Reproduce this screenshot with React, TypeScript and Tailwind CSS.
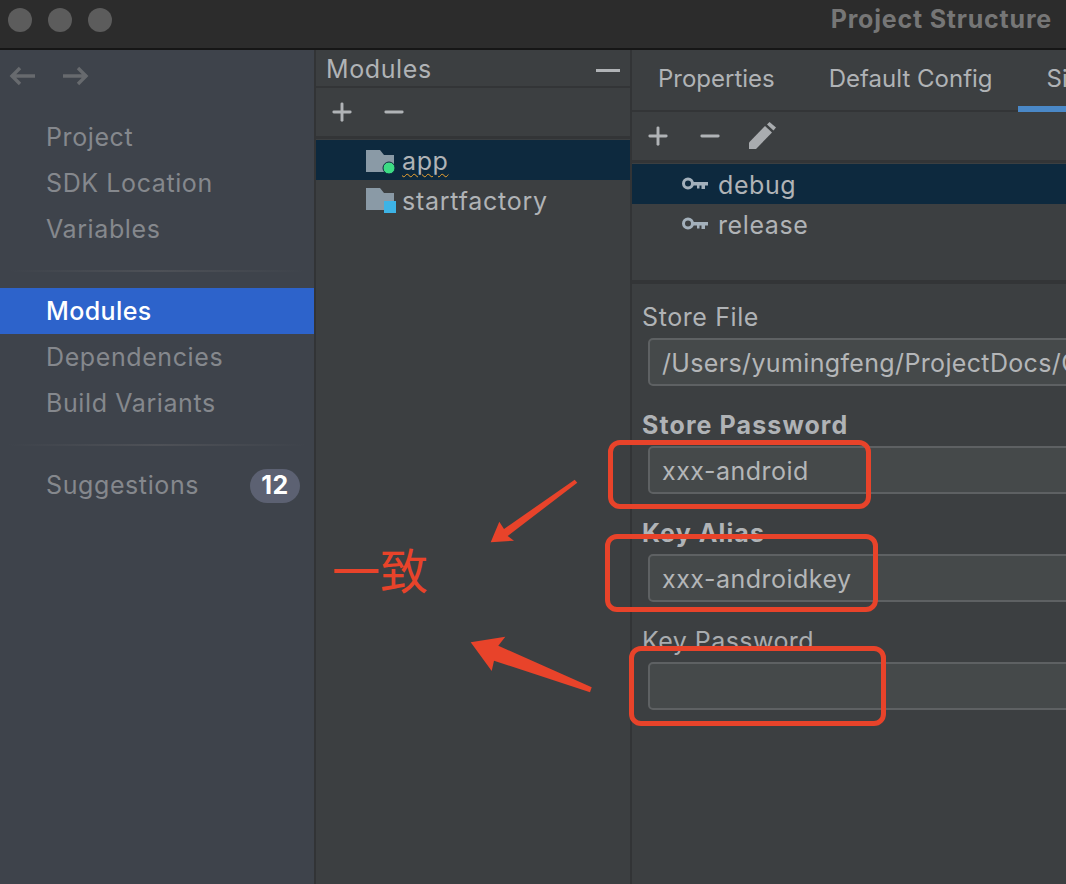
import { Minus, Plus } from "lucide-react";

const navTop = ["Project", "SDK Location", "Variables"];
const navMid = ["Modules", "Dependencies", "Build Variants"];

function ArrowLeft() {
  return (
    <svg width="28" height="20" viewBox="0 0 28 20" fill="none" stroke="#676a6e" strokeWidth="3.4">
      <path d="M27 10H3M12 2l-8 8 8 8" />
    </svg>
  );
}

function ArrowRight() {
  return (
    <svg width="28" height="20" viewBox="0 0 28 20" fill="none" stroke="#676a6e" strokeWidth="3.4">
      <path d="M1 10h24M16 2l8 8-8 8" />
    </svg>
  );
}

function Folder({ badge }: { badge: "dot" | "square" }) {
  return (
    <svg width="32" height="30" viewBox="0 0 32 30" className={`shrink-0 ${badge === "square" ? "mb-[4px]" : ""}`}>
      <path d="M0 5h14l4 5h10v17H0z" fill="#8a9aa6" />
      {badge === "dot" ? (
        <circle cx="23" cy="23" r="6" fill="#3ddc84" stroke="#0d293e" strokeWidth="1" />
      ) : (
        <rect x="18" y="18" width="12" height="12" fill="#3db3e6" />
      )}
    </svg>
  );
}

function KeyIcon() {
  return (
    <svg width="26" height="14" viewBox="0 0 26 14" fill="none" className="shrink-0">
      <circle cx="6" cy="6.500" r="4.500" stroke="#a3b0bb" strokeWidth="3" />
      <path d="M11 5h15v3.500h-3V12h-3.500V8.500h-2v3h-2.500V8.500H11z" fill="#a3b0bb" />
    </svg>
  );
}

function Pencil() {
  return (
    <svg width="28" height="28" viewBox="0 0 28 28" fill="#a9acaf">
      <path d="M1 20.500 17 4l7 6.500L8 27H1z" />
      <path d="M19 2.500 21.500 0 28 5.500 25.500 8.500z" />
    </svg>
  );
}

function Field({ label, value, bold, muted, tight }: { label: string; value?: string; bold?: boolean; muted?: boolean; tight?: boolean }) {
  return (
    <div className="flex h-[108px] flex-col">
      <div className={`h-[33px] pl-[10px] leading-[26px] ${bold ? "font-bold tracking-[1.1px]" : ""} ${muted ? "tracking-[0.45px] text-[#a9acaf]" : "text-[#b0b3b6]"}`}>
        {label}
      </div>
      <div className={`ml-[16px] mt-[1px] flex h-[48px] w-[460px] items-center overflow-hidden rounded-[5px] border-2 border-[#5e6163] bg-[#45494a] pl-[12px] pt-[4px] whitespace-nowrap text-[#b4b6b8] ${tight ? "tracking-[0.35px]" : "tracking-[0.5px]"}`}>
        {value}
      </div>
    </div>
  );
}

export default function App() {
  return (
    <div className="relative flex h-[884px] w-[1066px] flex-col overflow-hidden bg-[#3c3f41] font-['Inter',sans-serif] text-[25px] tracking-[0.6px]">
      {/* title bar */}
      <div className="flex h-[50px] shrink-0 items-center justify-between border-b-2 border-[#161616] bg-[#2c2c2c] pl-2 pr-[14px]">
        <div className="mb-[8px] flex gap-4">
          <div className="h-6 w-6 rounded-full bg-[#5c5c5c]" />
          <div className="h-6 w-6 rounded-full bg-[#5c5c5c]" />
          <div className="h-6 w-6 rounded-full bg-[#5c5c5c]" />
        </div>
        <div className="mb-[8px] font-bold tracking-[0.8px] text-[#767676]">Project Structure</div>
      </div>

      <div className="flex min-h-0 flex-1">
        {/* sidebar */}
        <div className="w-[316px] shrink-0 border-r-2 border-[#323436] bg-[#3e434b] text-[#85888d]">
          <div className="flex h-[52px] items-center gap-[26px] pl-2">
            <ArrowLeft />
            <ArrowRight />
          </div>
          <div className="mt-[13px]">
            {navTop.map((n) => (
              <div key={n} className="flex h-[46px] items-center pl-[46px]">{n}</div>
            ))}
          </div>
          <div className="mx-[8px] mt-[17px] mb-[16px] h-[2px] bg-linear-to-r from-transparent via-[#4e5157] to-transparent" />
          {navMid.map((n) => (
            <div key={n} className={`flex h-[46px] items-center pl-[46px] pt-[2px] ${n === "Modules" ? "bg-[#2d63cb] font-medium tracking-[0.4px] text-white" : ""}`}>
              {n}
            </div>
          ))}
          <div className="mx-[8px] mt-[18px] mb-[17px] h-[2px] bg-linear-to-r from-transparent via-[#4e5157] to-transparent" />
          <div className="flex h-[46px] items-center justify-between pl-[46px] pr-[14px]">
            <span>Suggestions</span>
            <span className="flex h-[34px] w-[50px] items-center justify-center rounded-full bg-[#5c6172] font-bold text-white">12</span>
          </div>
        </div>

        {/* modules column */}
        <div className="w-[316px] shrink-0 border-r-2 border-[#323436] text-[#b0b3b6]">
          <div className="flex h-[38px] items-center justify-between border-b-2 border-[#333537] pl-[10px] pr-[10px] pt-[4px]">
            <span>Modules</span>
            <div className="h-[3px] w-[24px] bg-[#b0b3b6]" />
          </div>
          <div className="flex h-[51px] items-center gap-[24px] border-b-[3px] border-[#333537] pl-[12px]">
            <Plus size={28} strokeWidth={2.5} />
            <Minus size={28} strokeWidth={2.5} />
          </div>
          <div className="pt-px">
            <div className="flex h-[40px] items-center gap-[4px] bg-[#0d293e] pl-[50px]">
              <Folder badge="dot" />
              <span className="pt-1 underline decoration-wavy decoration-[#f0a52f] decoration-1 underline-offset-[3px]">app</span>
            </div>
            <div className="flex h-[40px] items-center gap-[4px] pl-[50px]">
              <Folder badge="square" />
              <span className="pt-1 tracking-[0.75px]">startfactory</span>
            </div>
          </div>
        </div>

        {/* signing configs */}
        <div className="min-w-0 flex-1 text-[#b0b3b6]">
          <div className="relative flex h-[62px] gap-[54px] border-b-2 border-[#333537] pl-[26px] pt-[11px] text-[24px] tracking-normal whitespace-nowrap">
            <span>Properties</span>
            <span>Default Config</span>
            <span>Signing</span>
            <div className="absolute right-0 bottom-[-2px] h-[6px] w-[48px] bg-[#4a88c7]" />
          </div>
          <div className="flex h-[51px] items-center gap-[24px] border-b-[3px] border-[#333537] pl-[12px]">
            <Plus size={28} strokeWidth={2.5} />
            <Minus size={28} strokeWidth={2.5} />
            <Pencil />
          </div>
          <div className="h-[121px] border-b-4 border-[#333537] pt-px">
            <div className="flex h-[40px] items-center gap-[10px] bg-[#0d293e] pl-[50px]">
              <KeyIcon />
              <span className="pt-1">debug</span>
            </div>
            <div className="flex h-[40px] items-center gap-[10px] pl-[50px]">
              <KeyIcon />
              <span className="pt-1">release</span>
            </div>
          </div>
          <div className="pt-[20px]">
            <Field label="Store File" value="/Users/yumingfeng/ProjectDocs/Gradle/keystore" tight />
            <Field label="Store Password" value="xxx-android" bold />
            <Field label="Key Alias" value="xxx-androidkey" bold />
            <Field label="Key Password" muted />
          </div>
        </div>
      </div>

      {/* red annotations drawn on top of the screenshot */}
      <div className="absolute left-[608px] top-[440px] h-[69px] w-[263px] rounded-[12px] border-[5px] border-[#e8432a]" />
      <div className="absolute left-[605px] top-[534px] h-[78px] w-[273px] rounded-[12px] border-[5px] border-[#e8432a]" />
      <div className="absolute left-[629px] top-[646px] h-[80px] w-[257px] rounded-[12px] border-[5px] border-[#e8432a]" />
      <div className="absolute left-[332px] top-[533px] font-['Noto_Sans_CJK_SC',sans-serif] text-[48px] leading-[70px] tracking-normal text-[#e8432a]">一致</div>
      <svg className="absolute left-0 top-0" width="1066" height="884" fill="#e8432a">
        <path d="M490.700 542.300 499.300 521.700 504 529 574.700 479.700 577.300 482.700 507.700 536 514 540.700z" />
        <path d="M470.700 642.300 505.300 636.700 498.300 645.700 591.700 687.300 590 692.300 494 660.700 491.700 671z" />
      </svg>
    </div>
  );
}
